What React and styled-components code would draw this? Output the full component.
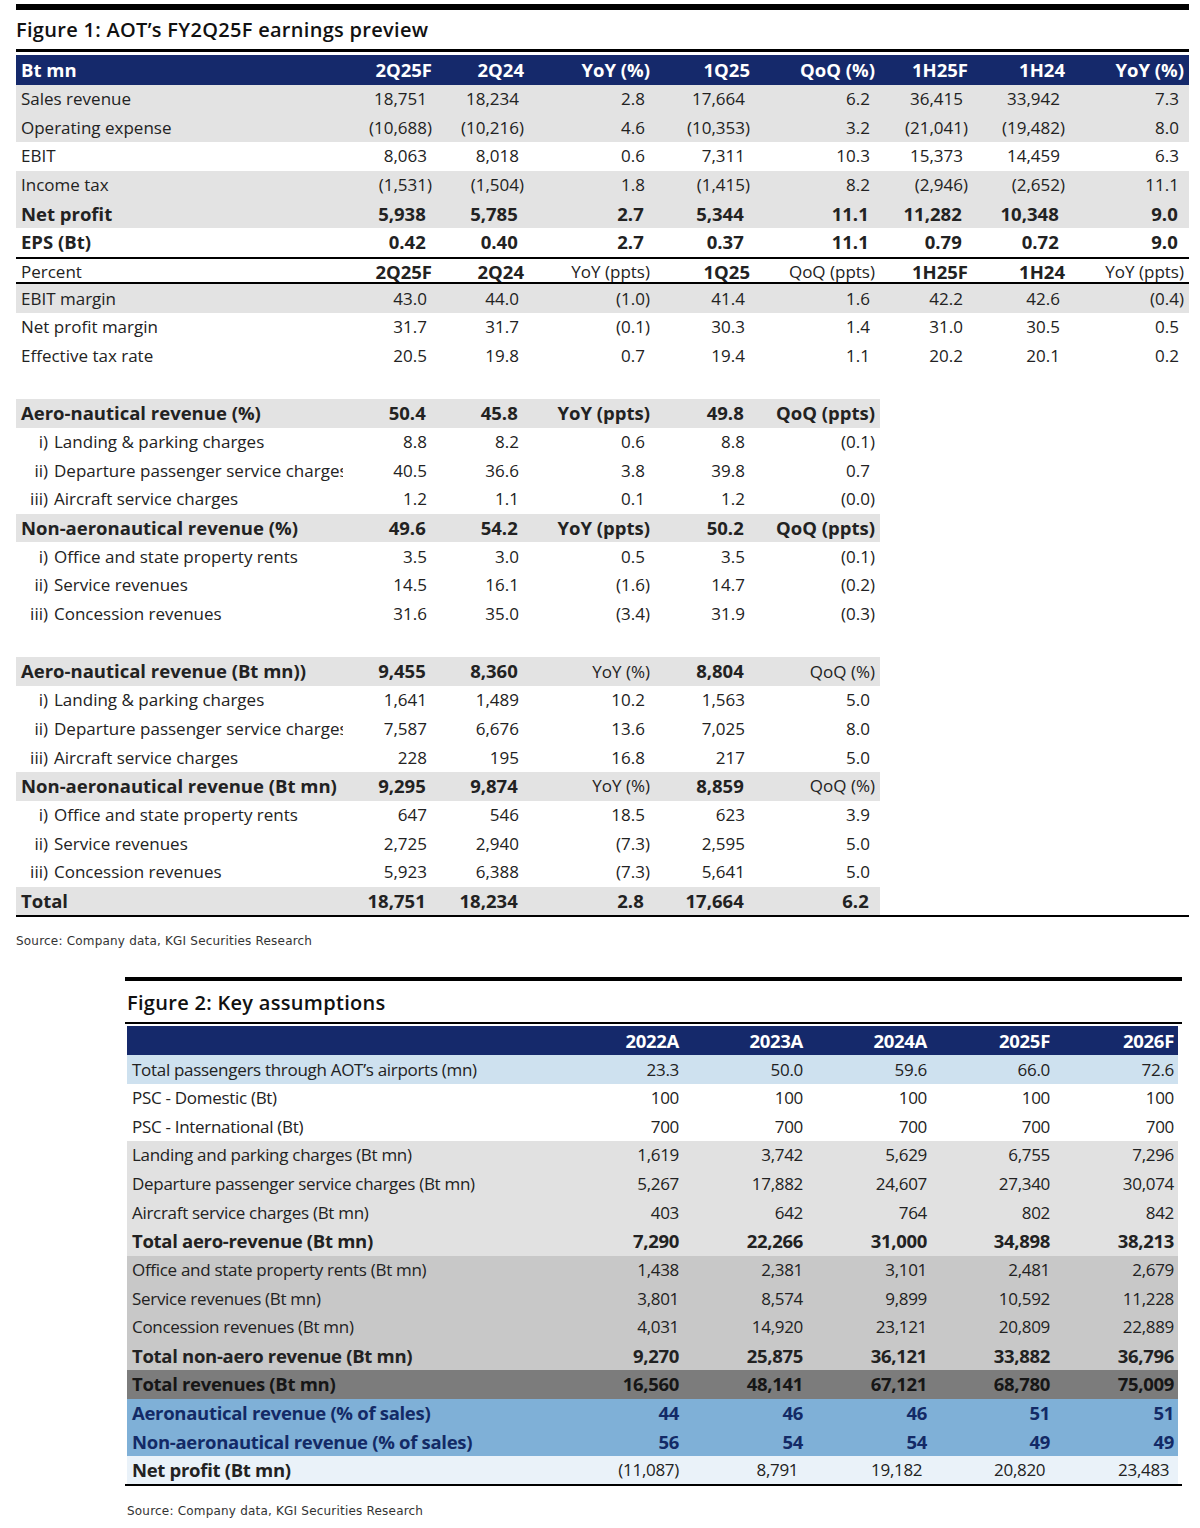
import React from "react";
import styled, { createGlobalStyle } from "styled-components";

const NAVY = "#15296b";
const GREY = "#e3e3e3";
const LIGHT_GREY = "#e1e1e1";
const MID_GREY = "#c8c8c8";
const DARK_GREY = "#7c7c7c";
const LIGHT_BLUE = "#cee1ef";
const MID_BLUE = "#7fb0d7";
const PALE_BLUE = "#eaf2f9";
const INK = "#222";

// column widths in px, label column first
const FIG1_COLS = [327, 94, 92, 126, 100, 125, 93, 97, 119];
const FIG1_NARROW = FIG1_COLS.slice(0, 6);
const FIG2_COLS = [432, 124, 124, 124, 123, 124];

const template = (cols) => cols.map((c) => `${c}px`).join(" ");
const total = (cols) => cols.reduce((a, b) => a + b, 0);

const GlobalStyle = createGlobalStyle`
  body {
    margin: 0;
    background: #fff;
    font-family: "Open Sans", "Liberation Sans", sans-serif;
    color: ${INK};
  }
`;

const Page = styled.main`
  width: 1200px;
  padding-top: 4px;
  padding-bottom: 8px;
`;

const Figure = styled.section`
  margin: ${(p) => p.$top || 0}px 0 0 ${(p) => p.$left}px;
  width: ${(p) => p.$width}px;
`;

const Bar = styled.div`
  height: ${(p) => p.$thick}px;
  background: #000;
`;

const Title = styled.h2`
  margin: 0;
  box-sizing: border-box;
  height: ${(p) => p.$height}px;
  padding: ${(p) => p.$lift || 0}px 0 0 ${(p) => p.$indent || 0}px;
  line-height: ${(p) => p.$height - (p.$lift || 0)}px;
  font-family: "Open Sans", sans-serif;
  font-size: 20px;
  font-weight: 600;
  letter-spacing: 0.3px;
  color: #111;
  white-space: nowrap;
`;

const Table = styled.div`
  margin: ${(p) => p.$top || 0}px ${(p) => p.$right || 0}px 0 ${(p) => p.$left || 0}px;
  letter-spacing: ${(p) => p.$tracking || 0}px;
`;

const Row = styled.div`
  display: grid;
  grid-template-columns: ${(p) => p.$cols};
  width: ${(p) => p.$width}px;
  height: ${(p) => p.$height}px;
  align-items: center;
  background: ${(p) => p.$bg || "transparent"};
  color: ${(p) => p.$color || INK};
`;

const Line = styled.div`
  width: ${(p) => p.$width}px;
  height: ${(p) => p.$thick}px;
  background: #000;
`;

const Cell = styled.div`
  font-size: ${(p) => (p.$bold ? 18.5 : 17)}px;
  font-weight: ${(p) => (p.$bold ? 700 : p.$weight || 400)};
  line-height: 1.4;
  white-space: nowrap;
`;

const LabelCell = styled(Cell)`
  padding-left: ${(p) => p.$pad}px;
  overflow-x: clip;
`;

const ValueCell = styled(Cell)`
  text-align: right;
  padding-right: ${(p) => p.$pad}px;
`;

const Numeral = styled.span`
  display: inline-block;
  width: 27px;
  margin-right: 6px;
  text-align: right;
`;

const Ghost = styled.span`
  visibility: hidden;
`;

const Source = styled.p`
  margin: ${(p) => p.$gap}px 0 0 ${(p) => p.$indent || 0}px;
  font-family: "DejaVu Sans", sans-serif;
  font-size: 12px;
  letter-spacing: 0.2px;
  line-height: 16px;
  color: #333;
`;

const fig1Summary = [
  { label: "Sales revenue", values: ["18,751", "18,234", "2.8", "17,664", "6.2", "36,415", "33,942", "7.3"], bg: GREY },
  { label: "Operating expense", values: ["(10,688)", "(10,216)", "4.6", "(10,353)", "3.2", "(21,041)", "(19,482)", "8.0"], bg: GREY },
  { label: "EBIT", values: ["8,063", "8,018", "0.6", "7,311", "10.3", "15,373", "14,459", "6.3"] },
  { label: "Income tax", values: ["(1,531)", "(1,504)", "1.8", "(1,415)", "8.2", "(2,946)", "(2,652)", "11.1"], bg: GREY },
  { label: "Net profit", values: ["5,938", "5,785", "2.7", "5,344", "11.1", "11,282", "10,348", "9.0"], bg: GREY, bold: true },
  { label: "EPS (Bt)", values: ["0.42", "0.40", "2.7", "0.37", "11.1", "0.79", "0.72", "9.0"], bold: true },
];

const fig1Margins = [
  { label: "EBIT margin", values: ["43.0", "44.0", "(1.0)", "41.4", "1.6", "42.2", "42.6", "(0.4)"], bg: GREY },
  { label: "Net profit margin", values: ["31.7", "31.7", "(0.1)", "30.3", "1.4", "31.0", "30.5", "0.5"] },
  { label: "Effective tax rate", values: ["20.5", "19.8", "0.7", "19.4", "1.1", "20.2", "20.1", "0.2"] },
];

const fig1Share = [
  { label: "Aero-nautical revenue (%)", values: ["50.4", "45.8", "YoY (ppts)", "49.8", "QoQ (ppts)"], bg: GREY, bold: true },
  { num: "i)", label: "Landing & parking charges", values: ["8.8", "8.2", "0.6", "8.8", "(0.1)"] },
  { num: "ii)", label: "Departure passenger service charges", values: ["40.5", "36.6", "3.8", "39.8", "0.7"] },
  { num: "iii)", label: "Aircraft service charges", values: ["1.2", "1.1", "0.1", "1.2", "(0.0)"] },
  { label: "Non-aeronautical revenue (%)", values: ["49.6", "54.2", "YoY (ppts)", "50.2", "QoQ (ppts)"], bg: GREY, bold: true },
  { num: "i)", label: "Office and state property rents", values: ["3.5", "3.0", "0.5", "3.5", "(0.1)"] },
  { num: "ii)", label: "Service revenues", values: ["14.5", "16.1", "(1.6)", "14.7", "(0.2)"] },
  { num: "iii)", label: "Concession revenues", values: ["31.6", "35.0", "(3.4)", "31.9", "(0.3)"] },
];

const fig1Amounts = [
  { label: "Aero-nautical revenue (Bt mn))", values: ["9,455", "8,360", "YoY (%)", "8,804", "QoQ (%)"], bg: GREY, bold: true, plain: [2, 4] },
  { num: "i)", label: "Landing & parking charges", values: ["1,641", "1,489", "10.2", "1,563", "5.0"] },
  { num: "ii)", label: "Departure passenger service charges", values: ["7,587", "6,676", "13.6", "7,025", "8.0"] },
  { num: "iii)", label: "Aircraft service charges", values: ["228", "195", "16.8", "217", "5.0"] },
  { label: "Non-aeronautical revenue (Bt mn)", values: ["9,295", "9,874", "YoY (%)", "8,859", "QoQ (%)"], bg: GREY, bold: true, plain: [2, 4] },
  { num: "i)", label: "Office and state property rents", values: ["647", "546", "18.5", "623", "3.9"] },
  { num: "ii)", label: "Service revenues", values: ["2,725", "2,940", "(7.3)", "2,595", "5.0"] },
  { num: "iii)", label: "Concession revenues", values: ["5,923", "6,388", "(7.3)", "5,641", "5.0"] },
  { label: "Total", values: ["18,751", "18,234", "2.8", "17,664", "6.2"], bg: GREY, bold: true },
];

const fig2Rows = [
  { label: "Total passengers through AOT’s airports (mn)", values: ["23.3", "50.0", "59.6", "66.0", "72.6"], bg: LIGHT_BLUE },
  { label: "PSC - Domestic (Bt)", values: ["100", "100", "100", "100", "100"] },
  { label: "PSC - International (Bt)", values: ["700", "700", "700", "700", "700"] },
  { label: "Landing and parking charges (Bt mn)", values: ["1,619", "3,742", "5,629", "6,755", "7,296"], bg: LIGHT_GREY },
  { label: "Departure passenger service charges (Bt mn)", values: ["5,267", "17,882", "24,607", "27,340", "30,074"], bg: LIGHT_GREY },
  { label: "Aircraft service charges (Bt mn)", values: ["403", "642", "764", "802", "842"], bg: LIGHT_GREY },
  { label: "Total aero-revenue (Bt mn)", values: ["7,290", "22,266", "31,000", "34,898", "38,213"], bg: LIGHT_GREY, bold: true },
  { label: "Office and state property rents (Bt mn)", values: ["1,438", "2,381", "3,101", "2,481", "2,679"], bg: MID_GREY },
  { label: "Service revenues (Bt mn)", values: ["3,801", "8,574", "9,899", "10,592", "11,228"], bg: MID_GREY },
  { label: "Concession revenues (Bt mn)", values: ["4,031", "14,920", "23,121", "20,809", "22,889"], bg: MID_GREY },
  { label: "Total non-aero revenue (Bt mn)", values: ["9,270", "25,875", "36,121", "33,882", "36,796"], bg: MID_GREY, bold: true },
  { label: "Total revenues (Bt mn)", values: ["16,560", "48,141", "67,121", "68,780", "75,009"], bg: DARK_GREY, bold: true, color: "#161616" },
  { label: "Aeronautical revenue (% of sales)", values: ["44", "46", "46", "51", "51"], bg: MID_BLUE, bold: true, color: "#132a66" },
  { label: "Non-aeronautical revenue (% of sales)", values: ["56", "54", "54", "49", "49"], bg: MID_BLUE, bold: true, color: "#132a66" },
  { label: "Net profit (Bt mn)", values: ["(11,087)", "8,791", "19,182", "20,820", "23,483"], bg: PALE_BLUE, boldLabel: true, weight: 500, ghost: true },
];

function DataRow({ row, cols, height, pad, labelPad, ghost }) {
  const plain = row.plain || [];
  const withGhost = ghost || row.ghost;
  return (
    <Row $cols={template(cols)} $width={total(cols)} $height={height} $bg={row.bg} $color={row.color}>
      <LabelCell $pad={labelPad} $bold={row.bold || row.boldLabel}>
        {row.num && <Numeral>{row.num}</Numeral>}
        {row.label}
      </LabelCell>
      {row.values.map((v, i) => {
        const bold = row.boldCols ? row.boldCols.includes(i) : row.bold && !plain.includes(i);
        return (
          <ValueCell key={i} $pad={pad} $bold={bold} $weight={row.weight}>
            {v}
            {withGhost && !v.endsWith(")") && <Ghost>)</Ghost>}
          </ValueCell>
        );
      })}
    </Row>
  );
}

const ROW1 = 28.7;
const ROW2 = 28.62;

function FigureOne() {
  const full = total(FIG1_COLS);
  const body = (rows, cols) =>
    rows.map((r, i) => (
      <DataRow key={i} row={r} cols={cols} height={ROW1} pad={5} labelPad={5} ghost />
    ));

  return (
    <Figure $left={16} $width={full}>
      <Bar $thick={6} />
      <Title $height={39}>Figure 1: AOT’s FY2Q25F earnings preview</Title>
      <Bar $thick={2.5} />
      <Table $top={3.5}>
        <DataRow
          row={{
            label: "Bt mn",
            values: ["2Q25F", "2Q24", "YoY (%)", "1Q25", "QoQ (%)", "1H25F", "1H24", "YoY (%)"],
            bg: NAVY,
            color: "#fff",
            bold: true,
          }}
          cols={FIG1_COLS}
          height={29.5}
          pad={5}
          labelPad={5}
        />
        {body(fig1Summary, FIG1_COLS)}
        <Line $width={full} $thick={2.5} />
        <DataRow
          row={{
            label: "Percent",
            values: ["2Q25F", "2Q24", "YoY (ppts)", "1Q25", "QoQ (ppts)", "1H25F", "1H24", "YoY (ppts)"],
            boldCols: [0, 1, 3, 5, 6],
          }}
          cols={FIG1_COLS}
          height={22.5}
          pad={5}
          labelPad={5}
        />
        <Line $width={full} $thick={2.5} />
        {body(fig1Margins, FIG1_COLS)}
        <Row $cols={template(FIG1_COLS)} $width={full} $height={ROW1} />
        {body(fig1Share, FIG1_NARROW)}
        <Row $cols={template(FIG1_COLS)} $width={full} $height={ROW1} />
        {body(fig1Amounts, FIG1_NARROW)}
        <Line $width={full} $thick={1.5} />
      </Table>
      <Source $gap={16}>Source: Company data, KGI Securities Research</Source>
    </Figure>
  );
}

function FigureTwo() {
  return (
    <Figure $top={28} $left={125} $width={1057}>
      <Bar $thick={4} />
      <Title $height={41} $lift={2} $indent={2}>Figure 2: Key assumptions</Title>
      <Bar $thick={2.5} />
      <Table $top={1.5} $left={2} $right={4} $tracking={-0.3}>
        <DataRow
          row={{
            label: "",
            values: ["2022A", "2023A", "2024A", "2025F", "2026F"],
            bg: NAVY,
            color: "#fff",
            bold: true,
          }}
          cols={FIG2_COLS}
          height={29.5}
          pad={4}
          labelPad={5}
        />
        {fig2Rows.map((r, i) => (
          <DataRow key={i} row={r} cols={FIG2_COLS} height={ROW2} pad={4} labelPad={5} />
        ))}
      </Table>
      <Bar $thick={2} />
      <Source $gap={17} $indent={2}>Source: Company data, KGI Securities Research</Source>
    </Figure>
  );
}

export default function App() {
  return (
    <Page>
      <GlobalStyle />
      <FigureOne />
      <FigureTwo />
    </Page>
  );
}
